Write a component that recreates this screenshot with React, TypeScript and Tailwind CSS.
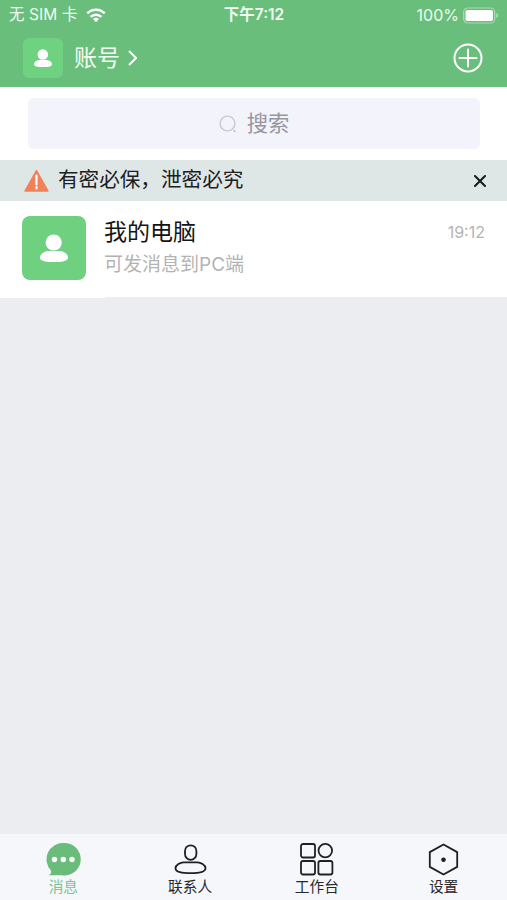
import React from "react";

const PersonGlyph = ({ className }: { className?: string }) => (
  <svg viewBox="0 0 28 28" fill="#fff" className={className}>
    <circle cx="13.7" cy="8.5" r="8.1" />
    <path d="M0 23.6C0 19.8 4.6 17 9 17h10c4.400 0 9 2.800 9 6.600C28 27 22.500 28.200 14 28.200S0 27 0 23.600Z" />
  </svg>
);

const StatusBar = () => (
  <div className="flex h-[30px] items-center pl-[9px] pr-2 text-[15.5px] leading-none text-[#effcef]">
    <div className="flex flex-1 items-center">
      <span className="whitespace-nowrap tracking-[0.1px]">无 SIM 卡</span>
      <svg viewBox="0 0 20 15" fill="none" stroke="#fff" strokeWidth="2.500" className="ml-2 h-[15px] w-5">
        <path d="M1.300 5.400a12.400 12.400 0 0 1 17.400 0" />
        <path d="M4.600 8.900a7.800 7.800 0 0 1 10.800 0" />
        <path d="M10 14.200l3-3.200a4.500 4.500 0 0 0-6 0Z" fill="#fff" stroke="none" />
      </svg>
    </div>
    <span className="text-[15.500px] font-semibold whitespace-nowrap">下午7:12</span>
    <div className="flex flex-1 items-center justify-end">
      <span className="text-[16px]">100%</span>
      <svg viewBox="0 0 36 17" className="ml-1 h-[17px] w-9">
        <rect x="0.700" y="1" width="31" height="15" rx="4" fill="none" stroke="#a9dcb2" strokeWidth="1.200" />
        <rect x="2.500" y="3" width="27.500" height="11" rx="1.800" fill="#fff" />
        <path d="M33.200 6c1.600.5 2 1.500 2 2.500s-.4 2-2 2.500Z" fill="#a9dcb2" />
      </svg>
    </div>
  </div>
);

const Header = () => (
  <header className="h-[87px] bg-[#69be7b] text-white">
    <StatusBar />
    <div className="flex h-[56px] items-center pl-[23px] pr-6">
      <div className="flex h-10 w-10 items-center justify-center rounded-md bg-[#6fd280]">
        <PersonGlyph className="h-[18px] w-[18px]" />
      </div>
      <span className="ml-[11px] text-[23px] leading-none text-[#f2fff2]">账号</span>
      <svg viewBox="0 0 9 16" fill="none" stroke="#fff" strokeWidth="2" className="ml-2 h-4 w-[9px]">
        <path d="M1 1l7 7-7 7" />
      </svg>
      <svg viewBox="0 0 30 30" fill="none" stroke="#fff" strokeWidth="2" strokeLinecap="round" className="ml-auto h-[30px] w-[30px]">
        <circle cx="15" cy="15" r="13.500" />
        <path d="M6.500 15h17M15 6.500v17" />
      </svg>
    </div>
  </header>
);

const Search = () => (
  <div className="h-[73px] bg-white pt-[11px] pr-[27px] pl-7">
    <div className="flex h-[51px] items-center justify-center rounded-md bg-[#f2f3fb]">
      <svg viewBox="0 0 18 18" fill="none" stroke="#c8c8cc" strokeWidth="1.400" strokeLinecap="round" className="mr-[10px] h-[18px] w-[18px]">
        <circle cx="8.500" cy="8.500" r="7.400" />
        <path d="M15.300 15.700l.5.500" strokeWidth="2" />
      </svg>
      <span className="text-[21.300px] leading-none text-[#96969f]">搜索</span>
    </div>
  </div>
);

const Notice = () => (
  <div className="flex h-[41px] items-center bg-[#dfe7e6] pr-[21px] pl-6">
    <svg viewBox="0 0 25 23" className="h-[23px] w-[25px]">
      <path d="M12.500 1.500L24 22H1Z" fill="#f08159" stroke="#f08159" strokeWidth="1.500" strokeLinejoin="round" />
      <path d="M12.500 6.500v9M12.500 18v1.500" stroke="#fff" strokeWidth="2.200" strokeLinecap="round" />
    </svg>
    <span className="ml-[9px] text-[20.600px] leading-none text-[#1b2024]">有密必保，泄密必究</span>
    <svg viewBox="0 0 12 12" stroke="#15191c" strokeWidth="2" strokeLinecap="round" className="ml-auto h-3 w-3">
      <path d="M1 1l10 10M11 1L1 11" />
    </svg>
  </div>
);

const Conversation = ({ name, message, time }: { name: string; message: string; time: string }) => (
  <div className="flex h-24 bg-white pt-[15px] pr-[22px] pl-[22px]">
    <div className="flex h-16 w-16 items-center justify-center rounded-lg bg-[#6fd080]">
      <PersonGlyph className="h-7 w-7" />
    </div>
    <div className="ml-[18px] flex-1">
      <div className="flex h-8 items-center justify-between">
        <span className="text-[23px] leading-none text-[#141414]">{name}</span>
        <span className="text-[16px] leading-none text-[#b4b4b4]">{time}</span>
      </div>
      <p className="mt-[7px] text-[19px] leading-none text-[#b3b3b3]">{message}</p>
    </div>
  </div>
);

const tabs = [
  {
    label: "消息",
    active: true,
    icon: (
      <>
        <path d="M17.500 1a16.300 16.300 0 1 1-2 32.300H2.500c2-1 3-2.300 2.500-4.800A16.300 16.300 0 0 1 17.500 1Z" fill="#69bc7a" stroke="none" />
        <g fill="#fff" stroke="none">
          <circle cx="8.500" cy="17.500" r="2.700" />
          <circle cx="17.300" cy="17.500" r="2.700" />
          <circle cx="26" cy="17.500" r="2.700" />
        </g>
      </>
    ),
  },
  {
    label: "联系人",
    icon: (
      <>
        <rect x="12" y="3.300" width="11.400" height="14.500" rx="5.700" />
        <path d="M10.500 20.400h14c3 0 8 2.600 8 5.800 0 3.800-6.500 5-15 5s-15-1.200-15-5c0-3.200 5-5.800 8-5.800Z" />
      </>
    ),
  },
  {
    label: "工作台",
    icon: (
      <>
        <rect x="2" y="2" width="14" height="13.500" rx="2" />
        <circle cx="26.300" cy="8.600" r="6.800" />
        <rect x="2" y="19" width="14" height="13.500" rx="2" />
        <rect x="19.400" y="19" width="14" height="13.500" rx="2" />
      </>
    ),
  },
  {
    label: "设置",
    icon: (
      <>
        <path d="M17.500 2.500l13.700 7.600v14.800l-13.700 7.600-13.700-7.600V10.100Z" />
        <circle cx="17.500" cy="17.800" r="2.300" fill="#202024" stroke="none" />
      </>
    ),
  },
];

const TabBar = () => (
  <nav className="grid h-[66px] grid-cols-4 bg-[#f6f7fb]">
    {tabs.map((tab) => (
      <div key={tab.label} className="flex flex-col items-center pt-2">
        <svg viewBox="0 0 35 35" fill="none" stroke="#202024" strokeWidth="1.800" className="h-[35px] w-[35px]">
          {tab.icon}
        </svg>
        <span
          className={
            tab.active
              ? "mt-[3px] text-[14.700px] leading-none text-[#7dc48c]"
              : "mt-[3px] text-[14.700px] leading-none text-[#28282c]"
          }
        >
          {tab.label}
        </span>
      </div>
    ))}
  </nav>
);

const App = () => (
  <div className="flex h-[900px] w-[507px] flex-col overflow-hidden bg-[#ebedf1] font-['Inter','Noto_Sans_CJK_SC',sans-serif]">
    <Header />
    <Search />
    <Notice />
    <Conversation name="我的电脑" message="可发消息到PC端" time="19:12" />
    <div className="h-px w-[105px] bg-white" />
    <main className="flex-1" />
    <TabBar />
  </div>
);

export default App;
